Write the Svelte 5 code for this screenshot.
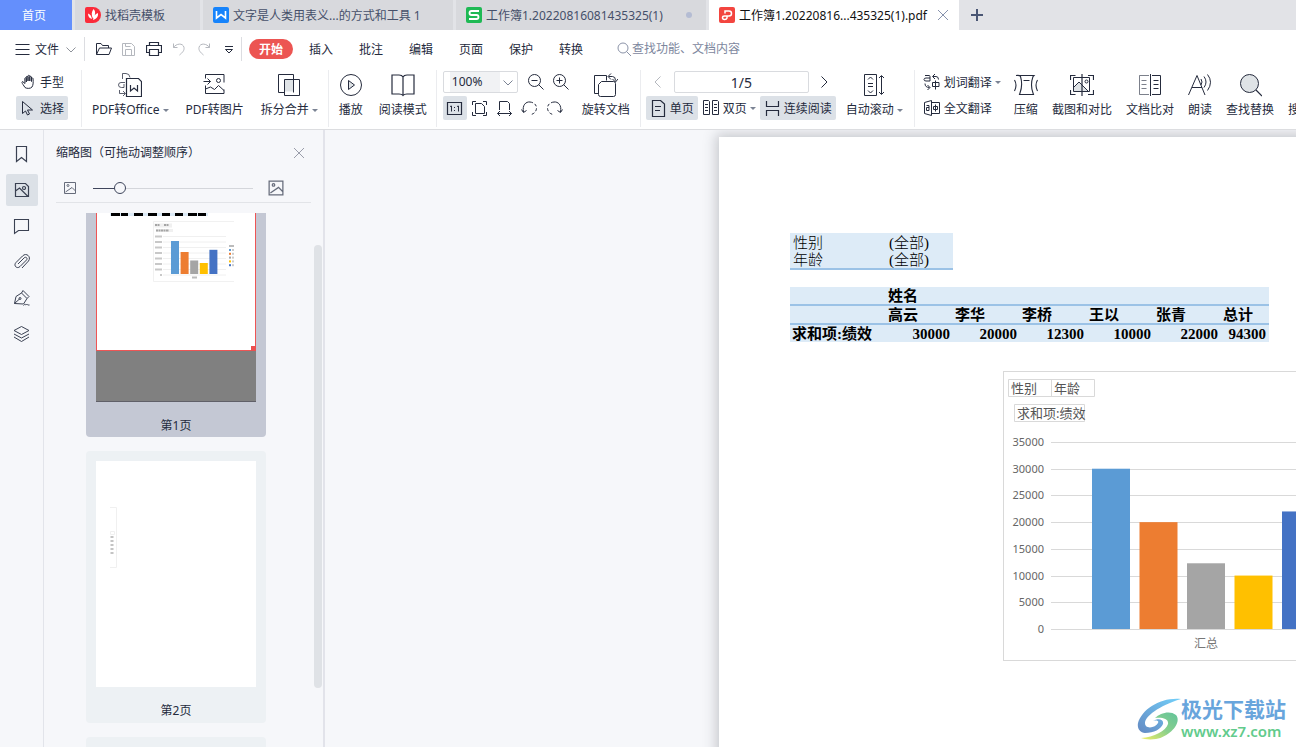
<script>
  const s = (d, extra = '') => `<path d="${d}" ${extra}/>`;
  const icons = {
    menu: s('M.5 3.500h14M.5 8.500h14M.5 13.500h14'),
    chevron: s('M1.500 4.500l4.500 4.500 4.500-4.500'),
    folder: s('M.5 13.500V2.500H5l1.500 2H12.500V7M.5 13.500L3.500 7H15.500L13 13.500z'),
    save: s('M1.500 2.500h9l3 3v9h-12zM4.500 14.500v-6h6v6M4.500 2.500v3h5'),
    print: s('M3.500 4.500v-3h9v3M3.500 11.500h-3v-7h15v7h-3M3.500 8.500h9v6h-9z', 'stroke-width="1.200"'),
    undo: s('M2.500 2.500v4h4M2.500 6.500C5 2.500 12 1.500 13 6.500c.5 3-1.500 5-4.500 7.500'),
    redo: s('M13.500 2.500v4h-4M13.500 6.500C11 2.500 4 1.500 3 6.500c-.5 3 1.500 5 4.500 7.500'),
    more: s('M4 5.500h8M4.500 8.500L8 12l3.500-3.500h-7'),
    search: s('M12 7a5 5 0 1 1-10 0 5 5 0 0 1 10 0M10.500 10.500L15 15'),
    hand: s('M5 9.500L2.500 7.500C1.500 8 2 9 3 10.500l2 3c1 1 5.500 1.500 7-.5 1-1.500 1.500-4 1-8.500-.5-1-1.500-.5-1.500.5V7.500V3c-.5-1-1.500-1-1.700 0V7V2c-.5-1-1.500-1-1.800 0V7V3C7.500 2 6.500 2 6.300 3V8V4.500C6 3.500 5 3.500 4.800 4.500z'),
    cursor: s('M2.500 1.500v12l3-2.500 2 4 2-1-2-4h5z'),
    office: s('M4.500 6V.5H8q3.500 0 4 4M7 9.500H3Q.5 9.500.5 12t3 2.500H6V11M1.500 17v3.500H7M5 18l2.500 2.500L5 23', 'opacity=".75"') + s('M8.500 5.500h12l3 3v15h-15zM12.500 12v6l3.500-3 3.500 3v-6', 'stroke-width="1.200"'),
    picture: s('M2.500 5.500v-4h18.500v8M2.500 12.500v8h18.500v-4M.5 8.500h7M4.500 5.500l3 3-3 3M2.500 16l5-2 4 2.500 4-4 5.500 5M17.500 7.500a2 2 0 1 1-4 0 2 2 0 0 1 4 0'),
    split: s('M7.500 6.500h9v12h-9z', 'fill="#dfe3e6" stroke="none"') + s('M7.500 19.500h-6v-18h15v18M16.500 6.500h6v16h-15v-16h9'),
    play: s('M22.500 12A10.500 10.500 0 1 1 1.500 12a10.500 10.500 0 0 1 21 0') + s('M9.500 7.500v9l6-4.500z', 'fill="#dfe3e6"'),
    book: s('M12 4q-1-2-4-2H1v19h7q3 0 4 1.500Q13 21 16 21h7V2h-7q-3 0-4 2v18', 'stroke-width="1.200"'),
    zoomOut: s('M13.500 7.500a6 6 0 1 1-12 0 6 6 0 0 1 12 0M11.500 11.500l5 5M4.500 7.500h6'),
    zoomIn: s('M13.500 7.500a6 6 0 1 1-12 0 6 6 0 0 1 12 0M11.500 11.500l5 5M4.500 7.500h6M7.500 4.500v6'),
    actual: s('M1.500 2.500h14v12h-14z', 'stroke-width="1.200"') + s('M4 6.500l1.500-.5v5.500M11 6.500l1.500-.5v5.500M8.500 7v1M8.500 10v1'),
    fitPage: s('M4.500 3.500h6l3 3v7h-9zM1.500 5V1.500H5M12 1.500h3.500V5M15.500 12v3.500H12M5 15.500H1.500V12'),
    fitWidth: s('M3.500 10V1.500h8l2 2V10M1.500 13.500h14M4 11l-2.500 2.500L4 16M13 11l2.500 2.500L13 16'),
    rotL: s('M2.500 12C1 5 5 1.500 9 2') + s('M9 2c9 1 8 11 1 12.500', 'stroke-dasharray="3 2"') + s('M.5 9.500l2 3 3-2'),
    rotR: s('M14.500 12C16 5 12 1.500 8 2') + s('M8 2c-9 1-8 11-1 12.500', 'stroke-dasharray="3 2"') + s('M16.500 9.500l-2 3-3-2'),
    rotate: s('M4.500 20.500H.5v-18h12v5M4.500 11.500l3-3H19.500q2 0 2 2v11q0 2-2 2h-13q-2 0-2-2zM14.500 3.500h4q3 0 3 4M17 .5l-3 3 3 3M18.500 6l3 3 2.500-3'),
    prev: s('M10.500 2.500L5 8l5.500 5.500'),
    next: s('M5.500 2.500L11 8l-5.500 5.500'),
    single: s('M2.500.5h8l4 3.500v12.500h-12zM5 6.500h6M5 10.500h5', 'stroke-width="1.200"'),
    double: s('M1.500 1.500h5l1 1v13h-6zM10.500 1.500h5l1 1v13h-6zM3 5.500h3M3 8.500h3M3 11.500h3M12 5.500h3M12 8.500h3M12 11.500h3'),
    continuous: s('M2.500 1v5.500h12V1M2.500 16V10.500h12V16', 'stroke-width="1.200"'),
    scroll: s('M2.500 1.500h12v21h-12zM6 6.500l2.500-2.500L11 6.500M6 17.500L8.500 20l2.500-2.500M6 10.500h5M6 13.500h5M19.500 3v18M17 5l2.500-2.500L22 5M17 19l2.500 2.500L22 19'),
    word: s('M2 2.500h4q1 0 1 1v4.500H3Q1 8 1 6.500T3 5h4M9.500 9.500h6.500v4h-6.500zM12.500 7.500v9M10 3.500h3q2.500 0 2.500 3M12 1l-2.500 2.500L12 6M2 10.500q0 4 4.500 4M4.500 12L7 14.500 4.500 17'),
    full: s('M1.500 3.500l7-2v15l-7-2zM8.500 3.500h8v11h-8M3.500 6.500h2.500v5H3.500v-3H6M10.500 7.500h4v3h-4zM12.500 5.500v7'),
    compress: s('M2 2.500Q6 2 6.500 3.500 9 12 6 20l-.5 1.500h14l-.5-1.500q-3-8 0-16.500l1-1H5M9.500 7.500h6M.5 7q3 5 0 11M23.500 7q-3 5 0 11', 'stroke-width="1.100"'),
    compare: s('M4 14l5-5 9 9H4z', 'fill="#dfe3e6" stroke="none"') + s('M.5 7V2.500h5M18 2.500h5.500V7M23.500 17v4.500H18M5.500 21.500h-5V17M12 1v22', 'stroke-width="1.200"') + s('M3.500 4.500h16v14h-16zM4 14l5-5 9 9M18 8.500a1.500 1.500 0 1 1-3 0 1.500 1.500 0 0 1 3 0'),
    docs: s('M11 2.500H1.500v19H11M3.500 7.500h5M3.500 11.500h5M3.500 15.500h5', 'opacity=".6"') + s('M12.500 1v22M14 2.500h8.500v19H14M15.500 7.500h5M15.500 11.500h5M15.500 15.500h5'),
    read: s('M.5 22L9 2.500 17 22M4 14.500h10M13 6q2 3 0 6M16 3.500q4 5.500 0 11M19.500 1.500q6 7.500 0 16'),
    find: s('M20.500 10.500a9 9 0 1 1-18 0 9 9 0 0 1 18 0', 'fill="#dfe3e6"') + s('M18 17l6 6', 'stroke-width="1.200"'),
    bookmark: s('M3.500 1.500h10v15l-5-4-5 4z', 'stroke-width="1.200"'),
    image: s('M2.500 2.500h10l3 3v10h-13zM2.500 10l4-3 8.500 8.500M12.500 7a1.500 1.500 0 1 1-3 0 1.500 1.500 0 0 1 3 0', 'stroke-width="1.200"'),
    comment: s('M1.500 2.500h14v11h-10l-4 3z', 'stroke-width="1.100"'),
    clip: s('M5 11l6-6c2-2 4 .5 2.500 2L7 13.500c-3 3-7-1-4-4L9.500 3c4-4 9 1 6 5L9 15'),
    pen: s('M1.500 14.500L3 7.500 8.500 4l5.500 5.500-3.500 5.500zM1.500 14.500L6.500 10M8.500 4L10 1.500l6 6-2 2M8 9.500a1 1 0 1 1-2 0 1 1 0 0 1 2 0M10.500 16.500c3-3 1 .5 3-1 1-1 .5 1 3 .5'),
    layers: s('M8.500 1.500l7.500 4-7.500 4-7.500-4zM1 9l7.500 4L16 9M1 12l7.500 4.500L16 12'),
    close: s('M3 3l10 10M13 3L3 13'),
    plus: s('M8 2v12M2 8h12', 'stroke-width="2"'),
    thumbPic: s('M2.500 2.500h11v11h-11zM3.500 12L10 7.500l3.500 3.500M7 5.500a1 1 0 1 1-2 0 1 1 0 0 1 2 0')
  };
  const viewBox = {
    zoomOut: 18, zoomIn: 18, actual: 17, fitPage: 17, fitWidth: 17, rotL: 17, rotR: 17, hand: 16, cursor: 16, chevron: 12,
    single: 17, double: 18, continuous: 17, word: 18, full: 18, bookmark: 18, image: 18, comment: 18, clip: 18, pen: 18, layers: 18
  };
  const fileTools = ['folder', 'save', 'print', 'undo', 'redo', 'more'];
  const menus = ['插入', '批注', '编辑', '页面', '保护', '转换'];
  const convert = [
    { icon: 'office', label: 'PDF转Office', drop: true },
    { icon: 'picture', label: 'PDF转图片' },
    { icon: 'split', label: '拆分合并', drop: true }
  ];
  const review = [
    { icon: 'compress', label: '压缩' },
    { icon: 'compare', label: '截图和对比' },
    { icon: 'docs', label: '文档比对' },
    { icon: 'read', label: '朗读' },
    { icon: 'find', label: '查找替换' }
  ];
  const rail = [
    ['bookmark', '书签'], ['image', '缩略图'], ['comment', '批注'],
    ['clip', '附件'], ['pen', '签名'], ['layers', '图层']
  ];
  const people = [
    { name: '高云', value: 30000, color: '#5b9bd5' },
    { name: '李华', value: 20000, color: '#ed7d31' },
    { name: '李桥', value: 12300, color: '#a5a5a5' },
    { name: '王以', value: 10000, color: '#ffc000' },
    { name: '张青', value: 22000, color: '#4472c4' }
  ];
  const total = people.reduce((sum, p) => sum + p.value, 0);
  const ticks = [35000, 30000, 25000, 20000, 15000, 10000, 5000, 0];
  const yOf = (v) => 258 - (v * 187) / 35000;
  let zoom = $state('100%');
  let page = $state('1/5');
  let size = $state(14);
</script>

{#snippet icon(name, px = 16)}
  <svg class="icon" width={px} height={px} viewBox="0 0 {viewBox[name] ?? (px === 24 ? 24 : 16)} {viewBox[name] ?? (px === 24 ? 24 : 16)}" aria-hidden="true">{@html icons[name]}</svg>
{/snippet}

{#snippet arrow()}<i class="arrow"></i>{/snippet}

{#snippet tool(t)}
  <button class="tool">
    {@render icon(t.icon, 24)}
    <span class="tool-label">{t.label}{#if t.drop}{@render arrow()}{/if}</span>
  </button>
{/snippet}

<div class="app">
  <nav class="tabs">
    <button class="tab home"><span>首页</span></button>
    <button class="tab short">
      <svg width="16" height="16" viewBox="0 0 16 16" aria-hidden="true"><path d="M0 2q0-2 2-2h6a8 8 0 1 1 0 16H2q-2 0-2-2z" fill="#fb2b3a"/><path d="M8.500 2c2.500 2.500 2 6-.5 9.500C6 8 6.500 5 8.500 2zM3 6.500c2 .5 3.500 2.500 4 5.500C4.500 11.500 3 9.500 3 6.500zM13 6c.5 3.500-1.500 6-5 7 .5-3.500 2-6 5-7z" fill="#fff"/></svg>
      <span>找稻壳模板</span>
    </button>
    <button class="tab">
      <svg width="16" height="16" viewBox="0 0 16 16" aria-hidden="true"><rect width="16" height="16" rx="2" fill="#1683fb"/><path d="M3.500 4v7L8 7.500l4.500 3.500V4" fill="none" stroke="#fff" stroke-width="1.600"/></svg>
      <span>文字是人类用表义...的方式和工具 1</span>
    </button>
    <button class="tab">
      <svg width="16" height="16" viewBox="0 0 16 16" aria-hidden="true"><rect width="16" height="16" rx="2" fill="#1eb954"/><path d="M13 4H5.500Q3.500 4 3.500 6t2 2h5q2 0 2 2t-2 2H3" fill="none" stroke="#fff" stroke-width="1.800"/></svg>
      <span>工作簿1.20220816081435325(1)</span>
      <i class="dot"></i>
    </button>
    <button class="tab active">
      <svg width="16" height="16" viewBox="0 0 16 16" aria-hidden="true"><rect width="16" height="16" rx="2" fill="#f3453f"/><path d="M6 6.500V4H10q2.500 0 2.500 2.500T10 9H5.500Q3.500 9 3.500 10.700T5.500 12.500 8 11V9" fill="none" stroke="#fff" stroke-width="1.500"/></svg>
      <span>工作簿1.20220816...435325(1).pdf</span>
      <i class="tab-close">{@render icon('close')}</i>
    </button>
    <button class="new" aria-label="新建">{@render icon('plus', 16)}</button>
  </nav>

  <div class="menubar">
    <button class="file">{@render icon('menu')}<span>文件</span><i class="muted">{@render icon('chevron', 12)}</i></button>
    <i class="bar"></i>
    <div class="quick">
      {#each fileTools as name}
        <button class:off={['save', 'undo', 'redo'].includes(name)} aria-label={name}>{@render icon(name)}</button>
      {/each}
    </div>
    <i class="bar"></i>
    <button class="start">开始</button>
    <div class="menus">
      {#each menus as m}<button>{m}</button>{/each}
    </div>
    <label class="search">{@render icon('search')}<input placeholder="查找功能、文档内容" aria-label="查找" /></label>
  </div>

  <div class="ribbon">
    <div class="stack modes">
      <button class="small">{@render icon('hand')}<span>手型</span></button>
      <button class="small on">{@render icon('cursor')}<span>选择</span></button>
    </div>
    <div class="group wide">{#each convert as t}{@render tool(t)}{/each}</div>
    <div class="group view">
      {@render tool({ icon: 'play', label: '播放' })}
      {@render tool({ icon: 'book', label: '阅读模式' })}
    </div>
    <div class="group zooming">
      <div class="stack">
        <div class="row">
          <div class="zoom-box">
            <select bind:value={zoom} aria-label="缩放"><option>100%</option><option>150%</option></select>
            <span class="zoom-arrow">{@render icon('chevron', 12)}</span>
          </div>
          <button class="square" aria-label="缩小">{@render icon('zoomOut', 18)}</button>
          <button class="square" aria-label="放大">{@render icon('zoomIn', 18)}</button>
        </div>
        <div class="row tight">
          <button class="square on" aria-label="实际大小">{@render icon('actual', 17)}</button>
          <button class="square" aria-label="适合页面">{@render icon('fitPage', 17)}</button>
          <button class="square" aria-label="适合宽度">{@render icon('fitWidth', 17)}</button>
          <button class="square" aria-label="向左旋转">{@render icon('rotL', 17)}</button>
          <button class="square" aria-label="向右旋转">{@render icon('rotR', 17)}</button>
        </div>
      </div>
      {@render tool({ icon: 'rotate', label: '旋转文档' })}
    </div>
    <div class="group paging">
      <div class="stack">
        <div class="row pager">
          <button class="square off" aria-label="上一页">{@render icon('prev')}</button>
          <input bind:value={page} aria-label="页码" />
          <button class="square" aria-label="下一页">{@render icon('next')}</button>
        </div>
        <div class="row pages">
          <button class="small on">{@render icon('single', 17)}<span>单页</span></button>
          <button class="small slim">{@render icon('double', 18)}<span>双页</span>{@render arrow()}</button>
          <button class="small on">{@render icon('continuous', 17)}<span>连续阅读</span></button>
        </div>
      </div>
      {@render tool({ icon: 'scroll', label: '自动滚动', drop: true })}
    </div>
    <div class="group review">
      <div class="stack">
        <button class="small plain">{@render icon('word', 18)}<span>划词翻译</span>{@render arrow()}</button>
        <button class="small plain">{@render icon('full', 18)}<span>全文翻译</span></button>
      </div>
      {#each review as t}{@render tool(t)}{/each}
      <button class="tool">
        <svg class="icon" width="24" height="24" viewBox="0 0 24 24" aria-hidden="true"><path d="M11.500 3v16h12" stroke-width="2"/></svg>
        <span class="tool-label">搜索</span>
      </button>
    </div>
  </div>

  <main>
    <aside class="rail">
      {#each rail as [name, label]}
        <button class:on={name === 'image'} aria-label={label}>{@render icon(name, 18)}</button>
      {/each}
    </aside>

    <section class="panel">
      <header><h2>缩略图（可拖动调整顺序）</h2><button aria-label="关闭">{@render icon('close')}</button></header>
      <div class="sizer">
        {@render icon('thumbPic', 16)}
        <input type="range" bind:value={size} aria-label="缩略图大小" />
        {@render icon('thumbPic', 20)}
      </div>
      <div class="thumbs">
        <button class="card selected">
          <svg width="160" height="227" viewBox="0 0 160 227" aria-hidden="true">
            <rect width="160" height="227" fill="#808080"/>
            <path d="M0 226.500h160" stroke="#606068"/>
            <rect x=".5" y="-1" width="159" height="176.500" fill="#fff" stroke="#ee5555"/>
            <path d="M155 171h5v5h-5z" fill="#ec4f4f"/>
            <path d="M14 39.500h98" stroke="#ddebf7" stroke-width="3"/>
            <path d="M15 39.500h9m1 0h7m6 0h9m5 0h9m5 0h8m5 0h8m5 0h9m1 0h8" stroke="#000" stroke-width="3"/>
            <path d="M138 46.500H57.500v60H138" fill="none" stroke="#f1f1f1"/>
            <path d="M58.500 48.500h17.500v4H58.500zM60 54h17v3H60z" fill="#f0f0f0"/>
            <path d="M59 50h5m4 0h5M60 55.500h13" stroke="#a5a5a5" stroke-width="2" stroke-dasharray="2 .5"/>
            {#each ticks as v, i}
              <path d="M67 {61.500 + i * 5.500}h63" stroke="#f0f0f0"/>
              <path d="M{v ? 59 : 64} {61.500 + i * 5.500}H66" stroke="#c8c8c8" stroke-width="2"/>
            {/each}
            {#each people as p, i}
              <rect x={75 + i * 9.600} y={99 - p.value * 0.0011} width="8" height={p.value * 0.0011} fill={p.color}/>
              <rect x="133" y={74 + i * 3.800} width="2" height="2" fill={p.color}/>
              <rect x="136" y={74 + i * 3.800} width="2" height="2" fill="#ccc"/>
            {/each}
            <path d="M133 71h5M96 102.500h5" stroke="#bbb" stroke-width="2"/>
          </svg>
          <span>第1页</span>
        </button>
        <button class="card">
          <svg width="160" height="226" viewBox="0 0 160 226" aria-hidden="true">
            <rect width="160" height="226" fill="#fff"/>
            <path d="M14 46.500h6.500v60H14" fill="none" stroke="#f0f0f0"/>
            <path d="M14.500 70.500h4v3h-4z" fill="none" stroke="#f0f0f0"/>
            <path d="M16 75v18" stroke="#c4c4c4" stroke-width="3" stroke-dasharray="2 2"/>
          </svg>
          <span>第2页</span>
        </button>
        <button class="card" aria-label="第3页">
          <svg width="160" height="226" viewBox="0 0 160 226" aria-hidden="true"><rect width="160" height="226" fill="#fff"/></svg>
        </button>
      </div>
      <div class="scrollbar"></div>
    </section>

    <section class="canvas">
      <article class="sheet">
        <table class="filters">
          <tbody>
            <tr><td>性别</td><td>(全部)</td></tr>
            <tr><td>年龄</td><td>(全部)</td></tr>
          </tbody>
        </table>
        <table class="pivot">
          <colgroup><col class="first" />{#each people as _}<col class="mid" />{/each}<col class="last" /></colgroup>
          <thead>
            <tr><th></th><th colspan="6">姓名</th></tr>
            <tr><th></th>{#each people as p}<th>{p.name}</th>{/each}<th>总计</th></tr>
          </thead>
          <tbody>
            <tr><th>求和项:绩效</th>{#each people as p}<td>{p.value}</td>{/each}<td>{total}</td></tr>
          </tbody>
        </table>
        <svg class="chart" width="403" height="291" viewBox="0 0 403 291" role="img" aria-label="求和项:绩效">
          <rect x=".5" y=".5" width="402" height="289" fill="#fff" stroke="#d9d9d9"/>
          <path d="M5.500 8.500h86v17h-86zM48.500 8.500v17M11.500 33.500h70v17h-70z" fill="#fff" stroke="#d9d9d9"/>
          <text class="field" x="8" y="22">性别</text>
          <text class="field" x="51" y="22">年龄</text>
          <text class="field" x="14" y="47">求和项:绩效</text>
          {#each ticks as v}
            <path d="M48 {Math.round(yOf(v)) + 0.5}H330" stroke="#d9d9d9"/>
            <text class="tick" x="41" y={Math.round(yOf(v)) + 4}>{v}</text>
          {/each}
          {#each people as p, i}
            <rect x={89 + i * 47.500} y={yOf(p.value)} width="38" height={258 - yOf(p.value)} fill={p.color}/>
          {/each}
          <text class="category" x="203" y="277">汇总</text>
        </svg>
      </article>
    </section>
  </main>

  <div class="brand">
    <svg width="44" height="42" viewBox="0 0 44 42" aria-hidden="true">
      <defs>
        <linearGradient id="sky" x1="0" y1="1" x2="1" y2="0"><stop stop-color="#6489c2"/><stop offset="1" stop-color="#72d0fa"/></linearGradient>
        <linearGradient id="leaf" x1="0" y1="1" x2="1" y2="0"><stop stop-color="#f3ef62"/><stop offset=".5" stop-color="#8ad08c"/><stop offset="1" stop-color="#62c39b"/></linearGradient>
      </defs>
      <path d="M44 1C24-1 5 11 1 25c-1 6 2 9 7 10 9 0 16-4 18-9 1-5-5-6-10-3 4-1 6 0 5 2-2 4-9 6-12 3C4 22 18 9 44 1z" fill="url(#sky)"/>
      <path d="M18 20c5-5 15-8 21-3 6 7-5 21-20 24-7 1-12 0-15-1 13-1 25-7 27-14 1-6-7-7-13-6z" fill="url(#leaf)"/>
    </svg>
    <div><strong>极光下载站</strong><span>www.xz7.com</span></div>
  </div>
</div>

<style>
  :global(body) { margin: 0; }
  .app {
    position: relative; display: flex; flex-direction: column; height: 100vh; overflow: hidden;
    background: #fff; color: #252b3d; font: 12px/18px "Noto Sans", "Noto Sans CJK SC", sans-serif;
  }
  button, input, select { font: inherit; color: inherit; border: 0; padding: 0; margin: 0; background: none; box-sizing: border-box; }
  button { display: flex; align-items: center; justify-content: center; white-space: nowrap; flex: none; }
  input, select { outline: none; min-width: 0; }
  svg { display: block; flex: none; }
  .icon { fill: none; stroke: currentColor; stroke-width: 1; }
  .off, .muted { color: #b5b8be; }
  .on { background: #dce1e7; }
  .tab span, .file span, .small span { padding-top: 2px; }

  .tabs { display: flex; gap: 3px; height: 30px; background: #e2e3e7; flex: none; }
  .tab { width: 250px; padding: 0 11px 0 10px; gap: 4px; justify-content: flex-start; background: #d8d9dd; color: #46506a; }
  .tab.home { width: 72px; padding: 0 4px 0 0; justify-content: center; background: #648ffc; color: #fff; }
  .tab.short { width: 125px; }
  .tab.active { background: #fff; color: #111; padding-right: 8px; }
  .tab-close { margin-left: auto; color: #8792ad; }
  .dot { width: 6px; height: 6px; border-radius: 50%; background: #b4bcd3; margin-left: auto; margin-right: 3px; }
  .new { width: 30px; color: #4a5674; }

  .menubar { display: flex; align-items: center; height: 38px; flex: none; padding-left: 15px; }
  .file { gap: 4px; padding-right: 7px; }
  .file .muted { margin-left: 2px; color: #8e929a; }
  .bar { width: 1px; height: 24px; background: #dcdde1; margin: 0 7px 0 0; }
  .quick { display: flex; gap: 1px; }
  .quick button { width: 24px; height: 24px; }
  .start { width: 44px; height: 20px; border-radius: 10px; background: #ec5552; color: #fff; font-weight: 700; padding-top: 1px; }
  .menus { display: flex; padding-left: 3px; }
  .menus button { width: 50px; height: 24px; padding-top: 2px; }
  .search { display: flex; align-items: center; margin-left: 20px; color: #8b93a8; flex: 1; }
  .search input { flex: 1; }
  .search input::placeholder { color: #7d879e; opacity: 1; }

  .ribbon { display: flex; height: 62px; flex: none; padding: 2px 0 0 16px; box-sizing: border-box; border-bottom: 1px solid #dcdde0; overflow: hidden; }
  .stack { display: flex; flex-direction: column; gap: 2px; flex: none; }
  .modes { margin-right: 13px; }
  .row { display: flex; align-items: center; height: 24px; }
  .small { height: 24px; padding: 0 4px; gap: 4px; border-radius: 2px; justify-content: flex-start; }
  .modes .small { width: 52px; }
  .small.slim { padding: 0 1px; }
  .small.plain { padding: 0; }
  .group { display: flex; height: 57px; border-left: 1px solid #ebecef; padding: 0 7px 0 6px; flex: none; }
  .tool { flex-direction: column; justify-content: flex-start; height: 54px; padding: 3px 4px 0; gap: 4px; }
  .tool-label { display: flex; align-items: center; gap: 3px; }
  .arrow { border: 3px solid transparent; border-top-color: #7b8394; border-bottom: 0; width: 0; height: 0; }
  .wide { gap: 9px; padding-right: 6px; }
  .view { gap: 8px; padding-right: 5px; }
  .zooming { padding: 0 6px 0 6px; gap: 4px; }
  .zoom-box { position: relative; width: 75px; height: 22px; border: 1px solid #d9dbdf; border-radius: 2px; box-sizing: border-box; margin-right: 6px; }
  .zoom-box select { width: 100%; height: 20px; appearance: none; padding-left: 8px; background: linear-gradient(#f1f2f4, #f1f2f4) 6px 0 / 50px 20px no-repeat; }
  .zoom-arrow { position: absolute; right: 3px; top: 4px; color: #7b8394; pointer-events: none; }
  .square { width: 25px; height: 24px; border-radius: 2px; }
  .tight .square { width: 24px; }
  .tight { gap: 1px; }
  .paging { padding-left: 5px; gap: 5px; }
  .pager input { width: 135px; height: 22px; border: 1px solid #d9dbdf; border-radius: 2px; text-align: center; font-size: 14px; }
  .pager { gap: 3px; justify-content: center; width: 191px; }
  .pages { gap: 3px; }
  .pages .small { gap: 3px; }
  .review { padding: 0 0 0 8px; gap: 6px; }
  .review .stack { margin-right: 3px; }
  .review .small { gap: 3px; }

  main { display: flex; flex: 1; min-height: 0; background: #f6f7fa; }
  .rail { display: flex; flex-direction: column; align-items: center; gap: 4px; width: 43px; padding-top: 8px; border-right: 1px solid #e2e4ea; flex: none; color: #3a4152; }
  .rail button { width: 32px; height: 32px; border-radius: 2px; }
  .panel { position: relative; display: flex; flex-direction: column; width: 279px; border-right: 2px solid #e2e3ea; flex: none; }
  .panel header { display: flex; align-items: center; justify-content: space-between; height: 45px; padding: 0 16px 0 12px; }
  .panel header button { color: #9a9daa; }
  h2 { margin: 0; padding-top: 1px; font-size: 12px; font-weight: 400; }
  .sizer { display: flex; align-items: center; height: 25px; margin: 0 12px; padding: 0 0 2px 6px; border-bottom: 1px solid #e2e4e8; color: #666c7b; }
  .sizer input { width: 160px; height: 12px; margin: 0 13px 0 15px; appearance: none; background: linear-gradient(90deg, #3f465c 22px, #d4d6db 22px) 0 6px / 100% 1px no-repeat; }
  .sizer input::-webkit-slider-thumb { appearance: none; width: 12px; height: 12px; border: 1px solid #3f465c; border-radius: 50%; background: #f6f7fa; box-sizing: border-box; }
  .thumbs { display: flex; flex-direction: column; align-items: center; gap: 14px; flex: 1; min-height: 0; overflow: hidden; margin: 10px 15px 0 0; }
  .card { flex-direction: column; justify-content: flex-start; width: 180px; height: 272px; padding: 10px; gap: 15px; border-radius: 4px; background: #edf1f4; }
  .card.selected { background: #c4c8d4; margin-top: -48px; }
  .scrollbar { position: absolute; right: 1px; top: 115px; bottom: 59px; width: 8px; border-radius: 4px; background: #dfe2e6; }

  .canvas { flex: 1; min-width: 0; overflow: hidden; }
  .sheet { width: 797px; height: 1127px; margin: 7px 0 0 394px; padding: 96px 71px; box-sizing: border-box; background: #fff; box-shadow: 0 0 12px 3px rgba(60, 65, 75, .25); }
  table { border-collapse: collapse; table-layout: fixed; background: #ddebf7; color: #000; font: 15px/16px "Liberation Serif", "Noto Sans CJK SC", serif; }
  td, th { height: 18px; padding: 1px 3px 0; box-sizing: border-box; white-space: nowrap; text-align: left; }
  .filters { width: 163px; border-bottom: 2px solid #9bc2e6; }
  .filters td { font-weight: 300; }
  .filters td:first-child { width: 96px; }
  .pivot { width: 479px; margin-top: 17px; font-weight: 700; }
  .pivot thead tr { border-bottom: 2px solid #9bc2e6; }
  .pivot th { padding-left: 2px; padding-right: 0; }
  .pivot td { text-align: right; padding-left: 0; }
  .first { width: 96px; }
  .mid { width: 67px; }
  .last { width: 48px; }
  .chart { margin: 29px 0 0 213px; }
  .field { font: 13px "Noto Sans", "Noto Sans CJK SC", sans-serif; fill: #555; }
  .tick { font: 11px "Noto Sans", sans-serif; fill: #666; text-anchor: end; }
  .category { font: 12px "Noto Sans CJK SC", sans-serif; fill: #777; text-anchor: middle; }

  .brand { position: absolute; right: 10px; bottom: 6px; display: flex; align-items: center; }
  .brand div { display: flex; flex-direction: column; }
  .brand strong { font-size: 21px; line-height: 24px; color: #68a5dc; }
  .brand span { font: 600 15px/20px "Noto Sans", sans-serif; color: #62cb8c; }
</style>
